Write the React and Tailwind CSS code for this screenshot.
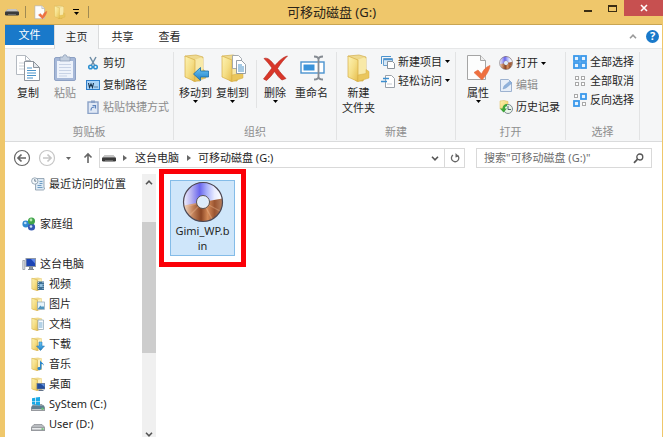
import React, { useState } from 'react';

// --- DATA ---
const tabs = ['主页', '共享', '查看'];

const places = [
  { name: '最近访问的位置', icon: 'recent', nested: true, gap: true },
  { name: '家庭组', icon: 'homegroup', gap: true },
  { name: '这台电脑', icon: 'pc' },
  { name: '视频', icon: 'video', nested: true },
  { name: '图片', icon: 'picture', nested: true },
  { name: '文档', icon: 'document', nested: true },
  { name: '下载', icon: 'download', nested: true },
  { name: '音乐', icon: 'music', nested: true },
  { name: '桌面', icon: 'desktop', nested: true },
  { name: 'SyStem (C:)', icon: 'system', nested: true },
  { name: 'User (D:)', icon: 'drive', nested: true },
];

// --- SHARED GRADIENTS ---
const Gradients = () => (
  <svg className="absolute h-0 w-0" aria-hidden="true">
    <defs>
      <linearGradient id="folder" x1="0" y1="0" x2="1" y2="1">
        <stop offset="0" stopColor="#fdf3b4" />
        <stop offset="0.5" stopColor="#f5df88" />
        <stop offset="1" stopColor="#e6bd4c" />
      </linearGradient>
      <linearGradient id="folderBack" x1="0" y1="0" x2="0" y2="1">
        <stop offset="0" stopColor="#f0dc94" />
        <stop offset="1" stopColor="#dcb850" />
      </linearGradient>
      <linearGradient id="blue" x1="0" y1="0" x2="0" y2="1">
        <stop offset="0" stopColor="#6cc6f3" />
        <stop offset="1" stopColor="#1f7fc9" />
      </linearGradient>
      <linearGradient id="discTop" x1="0" y1="0" x2="1" y2="0">
        <stop offset="0" stopColor="#f2f2ff" />
        <stop offset="0.2" stopColor="#b9b5f0" />
        <stop offset="0.42" stopColor="#6a66ee" />
        <stop offset="0.6" stopColor="#a9b0fa" />
        <stop offset="0.8" stopColor="#e9ecff" />
        <stop offset="1" stopColor="#ffffff" />
      </linearGradient>
      <linearGradient id="discBottom" x1="0" y1="0" x2="1" y2="0">
        <stop offset="0" stopColor="#f0dfd0" />
        <stop offset="0.22" stopColor="#c98a62" />
        <stop offset="0.45" stopColor="#8a4524" />
        <stop offset="0.62" stopColor="#d48a58" />
        <stop offset="0.8" stopColor="#9a5430" />
        <stop offset="1" stopColor="#b98260" />
      </linearGradient>
    </defs>
  </svg>
);

// --- SMALL GLYPHS ---
const Caret = ({ className = 'text-black' }) => (
  <svg className={`shrink-0 ${className}`} width="5" height="3" viewBox="0 0 5 3">
    <path d="M0 0h5L2.5 3z" fill="currentColor" />
  </svg>
);

const Crumb = () => (
  <svg width="4" height="6" viewBox="0 0 4 6" className="shrink-0">
    <path d="M0 0l4 3-4 3z" fill="#666" />
  </svg>
);

const Chevron = ({ down, className = 'text-[#555]' }) => (
  <svg width="8" height="5" viewBox="0 0 8 5" className={`shrink-0 ${className}`}>
    <path d={down ? 'M1 .8l3 3 3-3' : 'M1 4.2l3-3 3 3'} fill="none" stroke="currentColor" strokeWidth="1.6" />
  </svg>
);

const UsbDrive = () => (
  <svg width="14" height="8" viewBox="0 0 14 8" className="shrink-0">
    <path d="M3 1h8l3 3v3H0V4z" fill="#9b9b9b" />
    <path d="M3 1h8l2.4 2.6H.6z" fill="#c4c4c4" />
    <rect y="3.4" width="14" height="4" rx="1.2" fill="#3a3a3a" />
    <path d="M3 6.500h8" stroke="#777" strokeWidth=".8" />
  </svg>
);

const CheckPage = ({ size }) => (
  <svg width={size} height={size} viewBox="0 0 28 28" className="shrink-0">
    <path d="M3.5 1.500h13l5 5v19h-18z" fill="#fdfdfd" stroke="#a5a5a5" />
    <path d="M16.500 1.500v5h5" fill="#eee" stroke="#a5a5a5" />
    <path d="M10 18.500l4-2.500 3.500 4C19 16.500 21.500 13 26 11.500c-.5 5-4 10-8 14.500z" fill="#ee7040" stroke="#e2683c" strokeWidth=".6" />
  </svg>
);

const FolderShape = () => (
  <>
    <path d="M3 2l11-1 7 2v14l-3 10H11z" fill="url(#folderBack)" stroke="#d3af4c" strokeWidth=".7" />
    <path d="M12 6l7-2.500 2 1V20l-9 5z" fill="#f8e9a8" />
    <path d="M3 2l10 4v21.500L3 23z" fill="url(#folder)" stroke="#d5ae45" strokeWidth=".7" />
    <path d="M21 15.500l3 2V24l-11 3.500V21l8-1.500z" fill="#eac65c" stroke="#d5ae45" strokeWidth=".5" />
  </>
);

const Disc = ({ size }) => (
  <svg width={size} height={size} viewBox="0 0 42 42" className="shrink-0">
    <circle cx="21" cy="21" r="19.500" fill="url(#discBottom)" />
    <path d="M1.700 24.500A19.500 19.500 0 1 1 40.300 17.500L21 21z" fill="url(#discTop)" />
    <path d="M21 21L2 26M21 21L7 35M21 21l9 17M21 21l17 9" stroke="#f4c39d" strokeWidth="1.400" opacity=".35" />
    <circle cx="21" cy="21" r="19.500" fill="none" stroke="#4c4753" strokeWidth="1.200" />
    <circle cx="21" cy="21" r="6.500" fill="#f0f0f6" stroke="#555" strokeWidth="1" />
    <circle cx="21" cy="21" r="5" fill="#dcecfb" />
  </svg>
);

// --- LARGE RIBBON ICONS ---
const bigIcons = {
  copy: (
    <>
      <path d="M2.500 1.500h9l5 5v14h-14z" fill="#fff" stroke="#b4bac1" />
      <path d="M11.500 1.500v5h5" fill="none" stroke="#b4bac1" />
      <path d="M5 9h6M5 12h5M5 15h5" stroke="#ccd1d7" />
      <path d="M10.500 7.500h9l6 6v13h-15z" fill="#fff" stroke="#8e959e" />
      <path d="M19.500 7.500v6h6z" fill="#e3e7eb" stroke="#8e959e" />
      <path d="M13 14h5M13 16.500h9M13 19h9M13 21.500h9M13 24h6" stroke="#4a93c9" strokeWidth="1.200" />
    </>
  ),
  paste: (
    <>
      <rect x="3.500" y="3.500" width="21" height="23" rx="1.500" fill="#a6b8d8" stroke="#8da1c4" />
      <rect x="6" y="7" width="16" height="17" fill="#eef3fb" />
      <path d="M8 10.500h12M8 13.500h12M8 16.500h12M8 19.500h12M8 22h8" stroke="#c8d3e6" />
      <path d="M9 3h3c0-3 4-3 4 0h3v4H9z" fill="#c2cede" stroke="#8496b3" strokeWidth=".7" />
    </>
  ),
  moveTo: (
    <>
      <FolderShape />
      <path d="M11.500 20l7-6.500v3.500h8v6h-8v3.500z" fill="url(#blue)" stroke="#1b6ca8" strokeWidth=".8" />
    </>
  ),
  copyTo: (
    <>
      <FolderShape />
      <path d="M13.500 1.500h6l3 3v10h-9z" fill="#fff" stroke="#929ba5" strokeWidth=".8" />
      <path d="M17.500 6.500h5l4 4v9h-9z" fill="#fff" stroke="#7e8893" strokeWidth=".8" />
      <path d="M19 11h4M19 13h6M19 15h6M19 17h6" stroke="#4a93c9" />
    </>
  ),
  remove: (
    <path d="M3 4.500C7 3 10 7 14 11.500 18 7 22 3 26.500 2 23 5.500 19.500 9.500 16.500 14.500 19.500 19 22 21.500 25 24.500l-4 1.500c-3-2-5-5-7.500-8.500C11 21 8.500 24 5.500 26.500L2.500 25C5.500 21.500 8 17.500 11 14 8.500 10.500 6 7.500 3 4.500z" fill="#d9372a" stroke="#b22319" strokeWidth=".6" />
  ),
  rename: (
    <>
      <rect x="3" y="8" width="23" height="11" fill="#fff" stroke="#4b93cf" strokeWidth="1.400" />
      <rect x="5.500" y="10.500" width="11" height="6" fill="#3a93da" />
      <path d="M16 2.500c3 0 4.500 1 4.500 3v17c0 2-1.500 3-4.500 3M25 2.500c-3 0-4.500 1-4.500 3M25 25.500c-3 0-4.500-1-4.500-3" fill="none" stroke="#858b92" strokeWidth="1.800" />
    </>
  ),
  newFolder: <FolderShape />,
};

const BigIcon = ({ name }) =>
  name === 'properties' ? (
    <CheckPage size={28} />
  ) : (
    <svg width="28" height="28" viewBox="0 0 28 28" className="shrink-0">{bigIcons[name]}</svg>
  );

// --- SMALL RIBBON ICONS ---
const smallIcons = {
  cut: (
    <>
      <path d="M4 1l4.500 8M10 1L5.500 9" stroke="#6d8ca5" strokeWidth="1.500" />
      <circle cx="4.500" cy="11" r="1.800" fill="none" stroke="#2b8fd0" strokeWidth="1.500" />
      <circle cx="9.500" cy="11" r="1.800" fill="none" stroke="#2b8fd0" strokeWidth="1.500" />
    </>
  ),
  path: (
    <>
      <rect x=".5" y="2.500" width="13" height="9" fill="#a9d3f7" stroke="#2f7fcb" />
      <path d="M2.500 5l1 4.500L5 6l1.500 3.500 1-4.500" fill="none" stroke="#18344f" strokeWidth="1.100" />
      <path d="M8.500 9h1M10.500 9h1" stroke="#18344f" />
    </>
  ),
  shortcut: (
    <>
      <rect x="2" y="2" width="10" height="11.500" fill="#dfe8f5" stroke="#8ba2c7" strokeWidth="1.400" />
      <path d="M5 .500h4V3H5z" fill="#8ba2c7" />
      <path d="M5 10.500c0-3 1-3.500 3.500-3.500M6.500 5.500h3v3" fill="none" stroke="#5c83bd" strokeWidth="1.200" />
    </>
  ),
  newItem: (
    <>
      <path d="M.5 9V1.500H10" fill="none" stroke="#4b93cf" />
      <path d="M2.500 10.500v-7h9v7z" fill="#d6e9f9" stroke="#6aa0cf" />
      <path d="M3 4.500h8" stroke="#4b93cf" strokeWidth="1.400" />
      <path d="M6.500 6.500h5l2 2v5h-7z" fill="#fff" stroke="#8a929b" />
    </>
  ),
  access: (
    <>
      <path d="M4.500 1.500h6l3 3v9h-9z" fill="#fff" stroke="#9aa1a9" />
      <path d="M2 4.500h6M0 7.500h6" stroke="#3c8fd0" strokeWidth="1.300" />
      <path d="M6 10h5" stroke="#c5cbd2" />
    </>
  ),
  edit: (
    <>
      <path d="M1.500 1.500h8l3 3v9h-11z" fill="#e6eef8" stroke="#9db2d0" />
      <path d="M4 11l1-3 6-5 2 2-6 5z" fill="#8fb2dc" stroke="#7c9dc6" strokeWidth=".5" />
    </>
  ),
  history: (
    <>
      <path d="M1 1l4-.500 4 1V10L1 9z" fill="url(#folder)" stroke="#dcb850" strokeWidth=".5" />
      <circle cx="9" cy="9" r="4.500" fill="#eaf5e8" stroke="#7f8b93" />
      <path d="M9 6v3.500h3" fill="none" stroke="#50646f" />
      <path d="M1 8.500h2.500C3.500 6 5.500 4 8 4v2.300c-1.300 0-2 .8-2 2.200h2L4.500 12.500z" fill="#3fa63a" />
    </>
  ),
  all: (
    <g fill="#e6f3ff" stroke="#3a98ea" strokeWidth="1.800">
      <rect x="1" y="1" width="5" height="5" />
      <rect x="8" y="1" width="5" height="5" />
      <rect x="1" y="8" width="5" height="5" />
      <rect x="8" y="8" width="5" height="5" />
    </g>
  ),
  none: (
    <g fill="#fff" stroke="#a9a9a9">
      <rect x="2.500" y="2.500" width="3" height="3" />
      <rect x="8.500" y="2.500" width="3" height="3" />
      <rect x="2.500" y="8.500" width="3" height="3" />
      <rect x="8.500" y="8.500" width="3" height="3" />
    </g>
  ),
  invert: (
    <>
      <g fill="#fff" stroke="#a9a9a9">
        <rect x="1.500" y="1.500" width="3" height="3" />
        <rect x="9.500" y="9.500" width="3" height="3" />
      </g>
      <g fill="#e6f3ff" stroke="#3a98ea" strokeWidth="1.800">
        <rect x="8" y="1" width="5" height="5" />
        <rect x="1" y="8" width="5" height="5" />
      </g>
    </>
  ),
};

const SmallIcon = ({ name }) =>
  name === 'disc' ? (
    <Disc size={14} />
  ) : (
    <svg width="14" height="14" viewBox="0 0 14 14" fill="none" className="shrink-0">{smallIcons[name]}</svg>
  );

// --- NAVIGATION PANE ICONS ---
const MiniFolder = ({ children }) => (
  <>
    <path d="M.8 1.200L7 .500l4 1v11l-4 1-5-1z" fill="url(#folderBack)" />
    <path d="M6.500 3l4-1v10l-4 1z" fill="#fbf0c0" />
    <path d="M.8 1.200L6.500 3v10.800L.8 12z" fill="url(#folder)" stroke="#d5ae45" strokeWidth=".5" />
    {children}
  </>
);

const Platter = () => (
  <>
    <path d="M3 7.500h8l3 3v2.500c0 .6-.4 1-1 1H1c-.6 0-1-.4-1-1v-2.500z" fill="#b9bcc0" stroke="#777b80" strokeWidth=".6" />
    <path d="M.6 10.500h12.800v2.500H.6z" fill="#e8eaec" stroke="#777b80" strokeWidth=".6" />
    <path d="M10.500 12h2" stroke="#3fb34a" strokeWidth="1.200" />
  </>
);

const placeIcons = {
  recent: (
    <>
      <path d="M4 1.500h9v9.500h.500c0 1.500-.5 2-1.500 2H4.500V5H4z" fill="#dce9f4" stroke="#8598a8" strokeWidth=".8" />
      <path d="M8.500 4.500h3M8.500 6.500h3M6.500 8.500h4M6.500 10.500h5" stroke="#6e9cc4" />
      <circle cx="3.800" cy="4" r="3.200" fill="#f4f8fb" stroke="#8598a8" strokeWidth=".8" />
      <path d="M3.800 2v2.200h1.500" fill="none" stroke="#4b6377" strokeWidth=".8" />
    </>
  ),
  homegroup: (
    <>
      <circle cx="3.800" cy="7" r="3.400" fill="#2f88d0" />
      <circle cx="9.500" cy="10" r="3.600" fill="#3458b4" />
      <circle cx="9.500" cy="4" r="3.500" fill="#3fa34a" />
      <circle cx="9" cy="3" r="1.400" fill="#b7e7b0" />
      <circle cx="3.300" cy="6" r="1.300" fill="#bcdcf7" />
      <circle cx="9" cy="9.500" r="1.300" fill="#cfe2f8" />
    </>
  ),
  pc: (
    <>
      <path d="M.8 3.500h2v9h-2z" fill="#dfe3e8" stroke="#868e98" strokeWidth=".7" />
      <rect x="4" y="1.500" width="9.500" height="8" fill="#1c45b5" stroke="#8f98a5" />
      <path d="M9 2h4v4.500z" fill="#5e87ea" />
      <path d="M6 12.500h6M7.500 10h3v2h-3z" fill="#9aa3ad" stroke="#7d8691" strokeWidth="1" />
    </>
  ),
  video: (
    <MiniFolder>
      <rect x="6.500" y="4.500" width="6.500" height="8.500" fill="#3d6f94" />
      <path d="M7.500 5v7.500M12 5v7.500" stroke="#dceaf4" strokeWidth=".8" strokeDasharray="1 1" />
      <path d="M8.500 7h3v3h-3z" fill="#91c0df" />
    </MiniFolder>
  ),
  picture: (
    <MiniFolder>
      <rect x="6.500" y="5" width="7" height="7.500" fill="#e5f3fb" stroke="#8ba3b5" strokeWidth=".7" />
      <path d="M7 11.500l2.500-3 1.500 1.500 1-1 1 1v2H7z" fill="#4d94bd" />
    </MiniFolder>
  ),
  document: (
    <MiniFolder>
      <path d="M7 3h5.500v9.500H7z" fill="#f8fbfe" stroke="#8ba3b5" strokeWidth=".7" />
      <path d="M8 6h3.500M8 8h3.500M8 10h3.500" stroke="#63a0cd" strokeWidth=".9" />
    </MiniFolder>
  ),
  download: (
    <MiniFolder>
      <path d="M8 5h3v4h2.500l-4 4.500L5.500 9H8z" fill="url(#blue)" stroke="#1b6ca8" strokeWidth=".5" />
    </MiniFolder>
  ),
  music: (
    <MiniFolder>
      <path d="M9 3c.5 2.500 4 2.500 4 6-.5-1.500-1.500-2-2.500-2v4.500c-1 2.500-4.500 2-4-.500.3-1 1.500-1.300 2.500-1z" fill="#2a86cc" />
    </MiniFolder>
  ),
  desktop: (
    <MiniFolder>
      <rect x="6" y="6.500" width="8" height="5.500" fill="#224d9e" stroke="#64748b" strokeWidth=".7" />
      <path d="M10 7h3.500v3z" fill="#5f91dc" />
      <path d="M7.500 13.500h5" stroke="#64748b" />
    </MiniFolder>
  ),
  system: (
    <>
      <Platter />
      <path d="M1 8.500h12l.5 3.500H.5z" fill="#5f7f92" />
      <path d="M10.500 11.300h2" stroke="#5fe06c" strokeWidth="1" />
      <path d="M1 1.200l3-.500v3.200H1zM4.700.600L9 0v3.900H4.700zM1 4.600h3v3.200l-3-.400zM4.700 4.600H9v3.900l-4.300-.600z" fill="#19a9e6" />
    </>
  ),
  drive: <Platter />,
};

// --- RIBBON PARTS ---
const BigButton = ({ icon, label, caret, disabled, className = '' }) => (
  <button disabled={disabled} className={`flex shrink-0 flex-col items-center pt-[2px] leading-[15px] disabled:text-[#8c8c8c] ${className}`}>
    <BigIcon name={icon} />
    <span className="mt-[3px] whitespace-pre">{label}</span>
    {caret && <Caret />}
  </button>
);

const SmallButton = ({ icon, label, caret, disabled, className = 'h-[22px]' }) => (
  <button disabled={disabled} className={`flex items-center gap-[3px] whitespace-nowrap disabled:text-[#8c8c8c] ${className}`}>
    <SmallIcon name={icon} />
    <span>{label}</span>
    {caret && <Caret />}
  </button>
);

const Group = ({ title, className, children }) => (
  <section className={`flex shrink-0 flex-col justify-between border-r border-[#e2e3e4] ${className}`}>
    <div className="flex items-start">{children}</div>
    <h2 className="text-center leading-4 text-[#8f8f8f]">{title}</h2>
  </section>
);

const TitleBar = () => (
  <header className="grid h-6 shrink-0 grid-cols-[1fr_auto_1fr] items-center">
    <div className="flex items-center pl-[5px]">
      <UsbDrive />
      <span className="ml-[6px] h-3 w-px bg-[#a08a52]" />
      <button aria-label="属性" className="ml-[7px]"><CheckPage size={15} /></button>
      <button aria-label="新建文件夹" className="ml-[5px]">
        <svg width="14" height="14" viewBox="0 0 28 28"><FolderShape /></svg>
      </button>
      <button aria-label="自定义快速访问工具栏" className="ml-[6px] flex flex-col items-center gap-[2px]">
        <span className="h-px w-[6px] bg-black" />
        <Caret />
      </button>
      <span className="ml-[9px] h-3 w-px bg-[#a08a52]" />
    </div>
    <h1 className="text-[13px] leading-6 text-[#2b2418]">可移动磁盘 (G:)</h1>
    <div className="flex h-full items-start justify-end">
      <button aria-label="最小化" className="flex h-4 w-6 items-center justify-center pt-[5px]">
        <span className="h-[2px] w-2 bg-[#3b2d13]" />
      </button>
      <button aria-label="最大化" className="flex h-4 w-6 items-center justify-center">
        <span className="h-[7px] w-[9px] border border-t-2 border-[#3b2d13]" />
      </button>
      <button aria-label="关闭" className="flex h-4 w-[39px] items-center justify-center bg-[#c75050]">
        <svg width="8" height="8" viewBox="0 0 8 8"><path d="M1 1l6 6M7 1L1 7" stroke="#fff" strokeWidth="1.600" /></svg>
      </button>
    </div>
  </header>
);

const Ribbon = () => (
  <div className="flex h-[93px] shrink-0 overflow-hidden border-b border-[#dadbdc] bg-[#f5f6f7] pt-[3px] pb-px">
    <Group title="剪贴板" className="w-[169px]">
      <BigButton icon="copy" label="复制" className="ml-[9px]" />
      <BigButton icon="paste" label="粘贴" disabled className="ml-[9px]" />
      <div className="ml-[7px]">
        <SmallButton icon="cut" label="剪切" />
        <SmallButton icon="path" label="复制路径" />
        <SmallButton icon="shortcut" label="粘贴快捷方式" disabled />
      </div>
    </Group>
    <Group title="组织" className="w-[163px]">
      <BigButton icon="moveTo" label="移动到" caret className="ml-[5px]" />
      <BigButton icon="copyTo" label="复制到" caret className="ml-[4px]" />
      <span className="ml-[7px] mt-2 h-12 w-px bg-[#e2e3e4]" />
      <BigButton icon="remove" label="删除" caret className="ml-[4px]" />
      <BigButton icon="rename" label="重命名" className="ml-[6px]" />
    </Group>
    <Group title="新建" className="w-[119px]">
      <BigButton icon="newFolder" label={'新建\n文件夹'} className="ml-[5px]" />
      <div className="ml-[6px]">
        <SmallButton icon="newItem" label="新建项目" caret className="h-[19px]" />
        <SmallButton icon="access" label="轻松访问" caret className="h-[19px]" />
      </div>
    </Group>
    <Group title="打开" className="w-[110px]">
      <BigButton icon="properties" label="属性" caret className="ml-[8px]" />
      <div className="ml-[7px]">
        <SmallButton icon="disc" label="打开" caret />
        <SmallButton icon="edit" label="编辑" disabled />
        <SmallButton icon="history" label="历史记录" />
      </div>
    </Group>
    <Group title="选择" className="w-[74px]">
      <div className="ml-[7px]">
        <SmallButton icon="all" label="全部选择" className="h-[19px]" />
        <SmallButton icon="none" label="全部取消" className="h-[19px]" />
        <SmallButton icon="invert" label="反向选择" className="h-[19px]" />
      </div>
    </Group>
  </div>
);

const AddressBar = () => {
  const [query, setQuery] = useState('');

  return (
    <div className="flex h-[26px] shrink-0 items-end pr-[10px] pl-[8px]">
      <div className="flex h-5 items-center">
        <button aria-label="后退">
          <svg width="18" height="18" viewBox="0 0 18 18" fill="none" stroke="#666">
            <circle cx="9" cy="9" r="7.500" strokeWidth="1.200" />
            <path d="M13 9H5.500M8.500 5.500L5 9l3.500 3.500" strokeWidth="1.700" />
          </svg>
        </button>
        <button aria-label="前进" disabled className="ml-[7px]">
          <svg width="18" height="18" viewBox="0 0 18 18" fill="none" stroke="#c6c6c6">
            <circle cx="9" cy="9" r="7.500" strokeWidth="1.200" />
            <path d="M5 9h7.500M9.500 5.500L13 9l-3.500 3.500" strokeWidth="1.700" />
          </svg>
        </button>
        <button aria-label="最近的位置" className="ml-[10px]"><Caret className="text-[#666]" /></button>
        <button aria-label="上移" className="ml-[12px]">
          <svg width="10" height="12" viewBox="0 0 10 12"><path d="M5 11V2M1.500 5.500L5 2l3.500 3.500" fill="none" stroke="#666" strokeWidth="1.600" /></svg>
        </button>
      </div>
      <div className="ml-[6px] flex h-5 min-w-0 flex-1 items-center border border-[#d9d9d9] pl-[2px]">
        <UsbDrive />
        <span className="ml-[7px]"><Crumb /></span>
        <button className="ml-[8px] whitespace-nowrap">这台电脑</button>
        <span className="ml-[8px]"><Crumb /></span>
        <button className="ml-[7px] whitespace-nowrap">可移动磁盘 (G:)</button>
        <button aria-label="以前的位置" className="ml-auto mr-[5px]"><Chevron down /></button>
        <button aria-label="刷新" className="flex h-full w-5 items-center justify-center border-l border-[#d9d9d9]">
          <svg width="10" height="10" viewBox="0 0 10 10">
            <path d="M7.500 2.200A3.700 3.700 0 1 1 3 2" fill="none" stroke="#666" strokeWidth="1.300" />
            <path d="M5.500 0v4.500L9 3.500z" fill="#666" />
          </svg>
        </button>
      </div>
      <label className="ml-[11px] flex h-5 w-[176px] items-center border border-[#d9d9d9] px-[7px]">
        <input
          type="text"
          aria-label="搜索"
          value={query}
          onChange={(e) => setQuery(e.target.value)}
          placeholder={'搜索"可移动磁盘 (G:)"'}
          className="min-w-0 flex-1 bg-transparent outline-none placeholder:text-[#6d6d6d]"
        />
        <svg width="11" height="11" viewBox="0 0 11 11" fill="none" stroke="#555">
          <circle cx="6.800" cy="4" r="3" strokeWidth="1.300" />
          <path d="M4.600 6.200L1 9.800" strokeWidth="1.700" />
        </svg>
      </label>
    </div>
  );
};

const Sidebar = () => (
  <aside className="flex w-[151px] shrink-0 overflow-hidden">
    <nav className="min-w-0 flex-1 pt-[6px]">
      <ul>
        {places.map((place) => (
          <li key={place.name} className={place.gap ? 'mb-5' : ''}>
            <a href="#" className={`flex h-5 items-center gap-[4px] whitespace-nowrap ${place.nested ? 'pl-[26px]' : 'pl-[17px]'}`}>
              <svg width="14" height="14" viewBox="0 0 14 14" className="shrink-0">{placeIcons[place.icon]}</svg>
              {place.name}
            </a>
          </li>
        ))}
      </ul>
    </nav>
    <div className="mt-[6px] flex w-[14px] flex-col items-center bg-[#f0f0f0]">
      <div className="flex h-[48px] items-start pt-[6px]"><Chevron /></div>
      <div className="h-[131px] w-full bg-[#cdcdcd]" />
      <div className="mt-auto"><Chevron down /></div>
    </div>
  </aside>
);

const App = () => {
  const [activeTab, setActiveTab] = useState('主页');

  return (
    <div className="flex h-screen flex-col overflow-hidden bg-[#efc76b] font-['Noto_Sans','Noto_Sans_CJK_SC',sans-serif] text-[11px] leading-4 text-[#262626]">
      <Gradients />
      <TitleBar />

      <div className="ml-[5px] mr-px flex min-h-0 flex-1 flex-col border-t border-[#c9a552] bg-white">
        {/* Tabs */}
        <div className="flex h-6 shrink-0 items-start border-b border-[#e6e7e8]">
          <button className="h-5 w-[49px] bg-[#1979ca] text-white">文件</button>
          {tabs.map((tab) => (
            <button
              key={tab}
              onClick={() => setActiveTab(tab)}
              className={`h-6 border-x ${tab === activeTab ? 'w-[45px] border-[#dadbdc] bg-[#f5f6f7]' : 'w-[47px] border-transparent'}`}
            >
              {tab}
            </button>
          ))}
          <div className="ml-auto flex h-[22px] items-center gap-[9px] pr-[3px]">
            <button aria-label="最小化功能区"><Chevron className="text-[#999]" /></button>
            <button aria-label="帮助" className="flex h-[13px] w-[13px] items-center justify-center rounded-full bg-[#1979ca] text-[11px] font-bold text-white">?</button>
          </div>
        </div>

        <Ribbon />
        <AddressBar />

        <div className="flex min-h-0 flex-1">
          <Sidebar />
          <main className="flex-1 pl-[3px] pt-px">
            <div className="w-[87px] border-[5px] border-[#fb0007] px-[6px] py-[6px]">
              <button className="flex h-[76px] w-full flex-col items-center border border-[#84bce8] bg-[#cfe6fa]">
                <Disc size={42} />
                <span className="w-full break-all px-[4px] text-center leading-[15px]">Gimi_WP.bin</span>
              </button>
            </div>
          </main>
        </div>
      </div>
    </div>
  );
};

export default App;
